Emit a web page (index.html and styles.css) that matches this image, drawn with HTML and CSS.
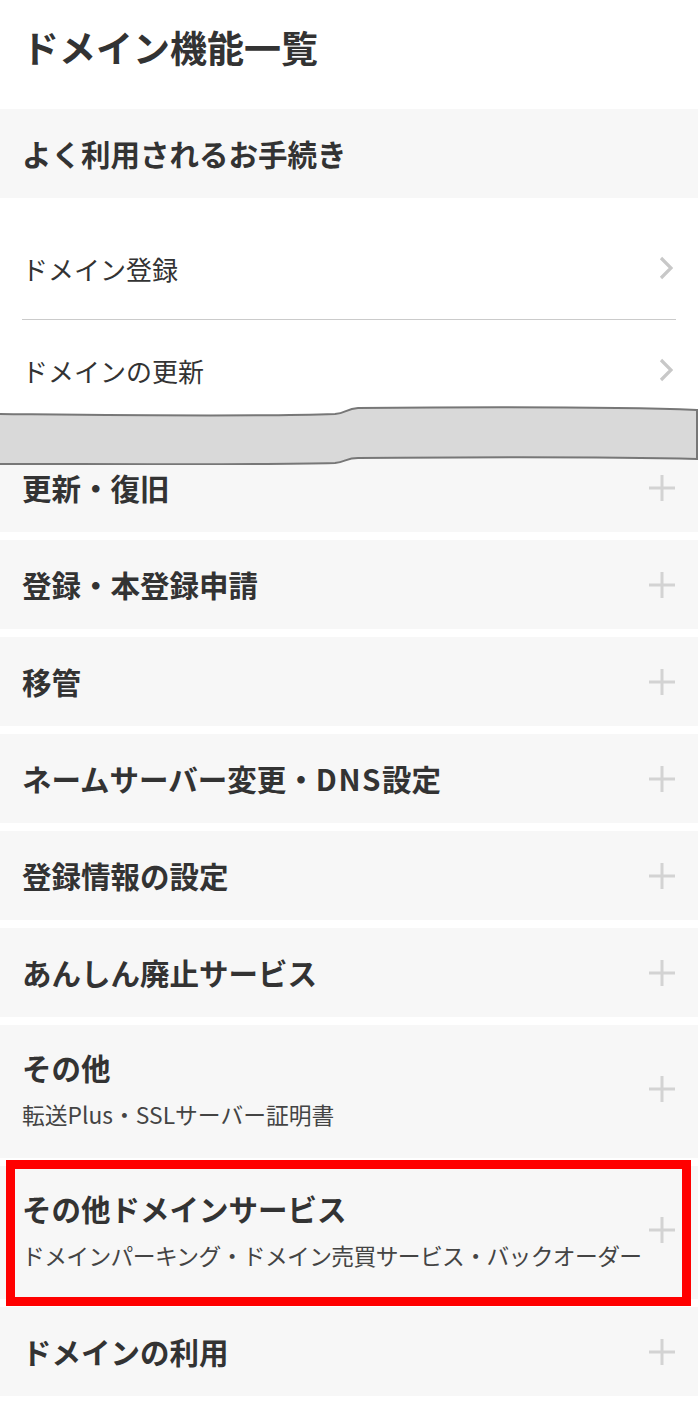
FILE: index.html
```html
<!DOCTYPE html>
<html lang="ja">
<head>
<meta charset="UTF-8">
<meta name="viewport" content="width=device-width, initial-scale=1.0">
<title>ドメイン機能一覧</title>
<link rel="stylesheet" href="styles.css">
</head>
<body>
<h1 class="page-title">ドメイン機能一覧</h1>

<section class="frequent">
  <h2 class="frequent-head">よく利用されるお手続き</h2>
  <ul class="link-list">
    <li class="link-item">
      <span>ドメイン登録</span>
      <svg class="chevron" width="14" height="24" viewBox="0 0 14 24"><polyline points="2,2 12,12 2,22" /></svg>
    </li>
    <li class="link-item">
      <span>ドメインの更新</span>
      <svg class="chevron" width="14" height="24" viewBox="0 0 14 24"><polyline points="2,2 12,12 2,22" /></svg>
    </li>
  </ul>
</section>

<div class="accordion">
  <svg class="tear" width="698" height="62" viewBox="0 0 698 62">
    <path d="M -3 11 C 100 12, 250 14, 335 11 C 346 10, 346 6, 358 5 C 480 4, 620 4, 697 7 L 697 56 C 620 54, 480 54, 358 55 C 346 55, 346 59, 335 60 C 250 62, 100 61, -3 61 Z" />
  </svg>

  <div class="acc-item">
    <div class="acc-text"><p class="acc-title">更新・復旧</p></div>
    <svg class="plus" width="26" height="26" viewBox="0 0 26 26"><path d="M13 0 V26 M0 13 H26" /></svg>
  </div>
  <div class="acc-item">
    <div class="acc-text"><p class="acc-title">登録・本登録申請</p></div>
    <svg class="plus" width="26" height="26" viewBox="0 0 26 26"><path d="M13 0 V26 M0 13 H26" /></svg>
  </div>
  <div class="acc-item">
    <div class="acc-text"><p class="acc-title">移管</p></div>
    <svg class="plus" width="26" height="26" viewBox="0 0 26 26"><path d="M13 0 V26 M0 13 H26" /></svg>
  </div>
  <div class="acc-item">
    <div class="acc-text"><p class="acc-title">ネームサーバー変更・<span class="latin">DNS</span>設定</p></div>
    <svg class="plus" width="26" height="26" viewBox="0 0 26 26"><path d="M13 0 V26 M0 13 H26" /></svg>
  </div>
  <div class="acc-item">
    <div class="acc-text"><p class="acc-title">登録情報の設定</p></div>
    <svg class="plus" width="26" height="26" viewBox="0 0 26 26"><path d="M13 0 V26 M0 13 H26" /></svg>
  </div>
  <div class="acc-item">
    <div class="acc-text"><p class="acc-title">あんしん廃止サービス</p></div>
    <svg class="plus" width="26" height="26" viewBox="0 0 26 26"><path d="M13 0 V26 M0 13 H26" /></svg>
  </div>
  <div class="acc-item has-sub">
    <div class="acc-text">
      <p class="acc-title">その他</p>
      <p class="acc-sub">転送Plus・SSLサーバー証明書</p>
    </div>
    <svg class="plus" width="26" height="26" viewBox="0 0 26 26"><path d="M13 0 V26 M0 13 H26" /></svg>
  </div>
  <div class="acc-item has-sub highlight">
    <div class="acc-text">
      <p class="acc-title">その他ドメインサービス</p>
      <p class="acc-sub tight">ドメインパーキング・ドメイン売買サービス・バックオーダー</p>
    </div>
    <svg class="plus" width="26" height="26" viewBox="0 0 26 26"><path d="M13 0 V26 M0 13 H26" /></svg>
  </div>
  <div class="acc-item">
    <div class="acc-text"><p class="acc-title">ドメインの利用</p></div>
    <svg class="plus" width="26" height="26" viewBox="0 0 26 26"><path d="M13 0 V26 M0 13 H26" /></svg>
  </div>
</div>
</body>
</html>
```

FILE: styles.css
```css
body {
  font-family: "Noto Sans CJK JP", "Noto Sans", sans-serif;
  color: #333;
  margin: 0;
  padding: 0;
  background: #fff;
}

.page-title {
  font-size: 37px;
  font-weight: 700;
  line-height: 52px;
  margin: 0 0 36px;
  padding: 21px 22px 0;
}

.frequent-head {
  margin: 0;
  height: 89px;
  padding: 0 22px;
  line-height: 89px;
  font-size: 29.5px;
  font-weight: 700;
  background-color: #f7f7f7;
}

.link-list {
  list-style: none;
  margin: 0 22px;
  padding: 19px 0 21px;
}

.link-item {
  display: flex;
  align-items: center;
  justify-content: space-between;
  height: 102px;
  padding-right: 3px;
  font-size: 26px;
}

.link-item + .link-item {
  border-top: 1px solid #cbcbcb;
  height: 100px;
  padding-bottom: 2px;
}

.chevron polyline {
  fill: none;
  stroke: #c8c8c8;
  stroke-width: 3.2;
}

.accordion {
  position: relative;
}

.tear {
  position: absolute;
  top: -40px;
  left: 0;
  z-index: 2;
}

.tear path {
  fill: #d9d9d9;
  stroke: #777;
  stroke-width: 2;
}

.acc-item {
  display: flex;
  align-items: center;
  justify-content: space-between;
  padding: 24px 23px 24px 22px;
  margin-bottom: 8px;
  background-color: #f7f7f7;
}

.acc-item:last-child {
  margin-bottom: 0;
}

.acc-item.has-sub {
  padding-top: 22px;
  padding-bottom: 27px;
}

.acc-text {
  flex: 1;
  min-width: 0;
}

.acc-title {
  margin: 0;
  font-size: 29.5px;
  font-weight: 700;
  line-height: 41px;
}

.latin {
  letter-spacing: 1.5px;
}

.acc-sub {
  margin: 10px 0 0;
  font-size: 22.8px;
  line-height: 33px;
  color: #444;
  white-space: nowrap;
}

.acc-sub.tight {
  letter-spacing: -0.65px;
}

.plus {
  flex: 0 0 26px;
}

.plus path {
  stroke: #d3d3d3;
  stroke-width: 3;
}

.highlight {
  position: relative;
}

.highlight::after {
  content: "";
  position: absolute;
  top: -6px;
  bottom: -7px;
  left: 6px;
  right: 7px;
  border: 9px solid #f00;
}
```
